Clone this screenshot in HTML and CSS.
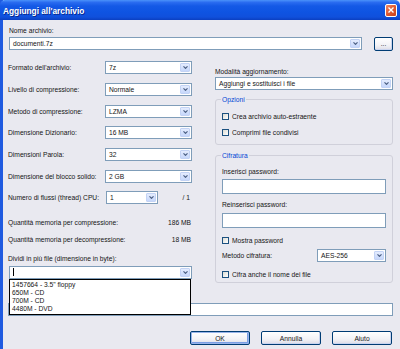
FILE: index.html
```html
<!DOCTYPE html>
<html lang="it">
<head>
    <meta charset="UTF-8">
    <title>Aggiungi all'archivio</title>
    <link rel="stylesheet" href="styles.css">
</head>
<body>
    <div class="window">
        <div class="titlebar">
            <span class="title">Aggiungi all'archivio</span>
            <span class="close">
                <svg width="6" height="6" viewBox="0 0 6 6"><path d="M0.5 0.5 L5.5 5.5 M5.5 0.5 L0.5 5.5" stroke="#fff" stroke-width="1.4"/></svg>
            </span>
        </div>

        <div class="content">
            <div class="label">Nome archivio:</div>
            <div class="name-row">
                <div class="combo name-combo">
                    <span class="value">documenti.7z</span>
                    <span class="arrow"><svg width="5" height="3" viewBox="0 0 5 3"><path d="M0.5 0.3 L2.5 2.4 L4.5 0.3" fill="none" stroke="#4d6185" stroke-width="1.1"/></svg></span>
                </div>
                <button class="btn browse">...</button>
            </div>

            <div class="columns">
                <div class="left">
                    <div class="settings">
                        <span>Formato dell'archivio:</span>
                        <div class="combo"><span class="value">7z</span><span class="arrow"><svg width="5" height="3" viewBox="0 0 5 3"><path d="M0.5 0.3 L2.5 2.4 L4.5 0.3" fill="none" stroke="#4d6185" stroke-width="1.1"/></svg></span></div>

                        <span>Livello di compressione:</span>
                        <div class="combo"><span class="value">Normale</span><span class="arrow"><svg width="5" height="3" viewBox="0 0 5 3"><path d="M0.5 0.3 L2.5 2.4 L4.5 0.3" fill="none" stroke="#4d6185" stroke-width="1.1"/></svg></span></div>

                        <span>Metodo di compressione:</span>
                        <div class="combo"><span class="value">LZMA</span><span class="arrow"><svg width="5" height="3" viewBox="0 0 5 3"><path d="M0.5 0.3 L2.5 2.4 L4.5 0.3" fill="none" stroke="#4d6185" stroke-width="1.1"/></svg></span></div>

                        <span>Dimensione Dizionario:</span>
                        <div class="combo"><span class="value">16 MB</span><span class="arrow"><svg width="5" height="3" viewBox="0 0 5 3"><path d="M0.5 0.3 L2.5 2.4 L4.5 0.3" fill="none" stroke="#4d6185" stroke-width="1.1"/></svg></span></div>

                        <span>Dimensioni Parola:</span>
                        <div class="combo"><span class="value">32</span><span class="arrow"><svg width="5" height="3" viewBox="0 0 5 3"><path d="M0.5 0.3 L2.5 2.4 L4.5 0.3" fill="none" stroke="#4d6185" stroke-width="1.1"/></svg></span></div>

                        <span>Dimensione del blocco solido:</span>
                        <div class="combo"><span class="value">2 GB</span><span class="arrow"><svg width="5" height="3" viewBox="0 0 5 3"><path d="M0.5 0.3 L2.5 2.4 L4.5 0.3" fill="none" stroke="#4d6185" stroke-width="1.1"/></svg></span></div>

                        <span>Numero di flussi (thread) CPU:</span>
                        <div class="threads">
                            <div class="combo thread-combo"><span class="value">1</span><span class="arrow"><svg width="5" height="3" viewBox="0 0 5 3"><path d="M0.5 0.3 L2.5 2.4 L4.5 0.3" fill="none" stroke="#4d6185" stroke-width="1.1"/></svg></span></div>
                            <span class="max">/ 1</span>
                        </div>
                    </div>

                    <div class="memory">
                        <span>Quantità memoria per compressione:</span>
                        <span>186 MB</span>
                    </div>
                    <div class="memory">
                        <span>Quantità memoria per decompressione:</span>
                        <span>18 MB</span>
                    </div>

                    <div class="label split-label">Dividi in più file (dimensione in byte):</div>
                    <div class="split">
                        <div class="combo"><span class="value"><span class="caret"></span></span><span class="arrow"><svg width="5" height="3" viewBox="0 0 5 3"><path d="M0.5 0.3 L2.5 2.4 L4.5 0.3" fill="none" stroke="#4d6185" stroke-width="1.1"/></svg></span></div>
                        <ul class="dropdown">
                            <li>1457664 - 3.5" floppy</li>
                            <li>650M - CD</li>
                            <li>700M - CD</li>
                            <li>4480M - DVD</li>
                        </ul>
                    </div>
                </div>

                <div class="right">
                    <div class="label mode-label">Modalità aggiornamento:</div>
                    <div class="combo mode-combo"><span class="value">Aggiungi e sostituisci i file</span><span class="arrow"><svg width="5" height="3" viewBox="0 0 5 3"><path d="M0.5 0.3 L2.5 2.4 L4.5 0.3" fill="none" stroke="#4d6185" stroke-width="1.1"/></svg></span></div>

                    <fieldset class="group options">
                        <legend>Opzioni</legend>
                        <div class="check"><span class="box"></span>Crea archivio auto-estraente</div>
                        <div class="check"><span class="box"></span>Comprimi file condivisi</div>
                    </fieldset>

                    <fieldset class="group crypt">
                        <legend>Cifratura</legend>
                        <div class="label pw-label">Inserisci password:</div>
                        <div class="input pw-input"></div>
                        <div class="label pw-label2">Reinserisci password:</div>
                        <div class="input pw-input2"></div>
                        <div class="check show-pw"><span class="box"></span>Mostra password</div>
                        <div class="cipher-row">
                            <span>Metodo cifratura:</span>
                            <div class="combo cipher-combo"><span class="value">AES-256</span><span class="arrow"><svg width="5" height="3" viewBox="0 0 5 3"><path d="M0.5 0.3 L2.5 2.4 L4.5 0.3" fill="none" stroke="#4d6185" stroke-width="1.1"/></svg></span></div>
                        </div>
                        <div class="check names"><span class="box"></span>Cifra anche il nome dei file</div>
                    </fieldset>
                </div>
            </div>

            <!-- the "Parametri" label sits under the open list -->
            <div class="params-gap"></div>
            <div class="input params"></div>

            <div class="buttons">
                <button class="btn default">OK</button>
                <button class="btn">Annulla</button>
                <button class="btn">Aiuto</button>
            </div>
        </div>
    </div>
</body>
</html>
```

FILE: styles.css
```css
* {
    margin: 0;
    padding: 0;
    box-sizing: border-box;
}

body {
    width: 400px;
    height: 349px;
    overflow: hidden;
    font-family: 'Liberation Sans', Arial, sans-serif;
    font-size: 6.7px;
    color: #151515;
}

.window {
    height: 349px;
    background: #e9e9f0;
    border-left: 3px solid #1f5ae0;
}

.titlebar {
    height: 20px;
    margin-left: -3px;
    display: flex;
    align-items: center;
    justify-content: space-between;
    padding: 0 3px 0 3px;
    border-radius: 5px 5px 0 0;
    background: linear-gradient(#4a92fa 0%, #2a6cf0 12%, #1459e6 30%, #0e54e2 60%, #1050dc 85%, #0b3fc0 100%);
}

.title {
    color: #fff;
    font-weight: bold;
    font-size: 8.3px;
    padding-top: 1px;
    text-shadow: 1px 1px 0 #0a2a90;
}

.close {
    width: 12px;
    height: 13px;
    display: flex;
    align-items: center;
    justify-content: center;
    border: 1px solid #fff;
    border-radius: 2px;
    background: linear-gradient(135deg, #f0886a 0%, #e05a30 50%, #c8401c 100%);
}

.content {
    padding: 5.5px 7px 0 5px;
}

.label {
    line-height: 9px;
    height: 9px;
}

.content > .label:first-child {
    padding-left: 1px;
}

/* listbox / combobox */
.combo {
    display: flex;
    height: 13px;
    padding: 1px;
    background: #fff;
    border: 1px solid #7f9db9;
}

.combo .value {
    flex: 1;
    line-height: 9px;
    padding-left: 2px;
    white-space: nowrap;
    overflow: hidden;
    display: flex;
    align-items: center;
}

.combo .arrow {
    width: 10px;
    display: flex;
    align-items: center;
    justify-content: center;
    border: 1px solid #c3d3f5;
    border-radius: 1px;
    background: linear-gradient(#e4ecfe, #c6d7fb);
}

.input {
    background: #fff;
    border: 1px solid #7f9db9;
}

.name-row {
    display: flex;
    margin-top: 2.5px;
    margin-left: 1px;
}

.name-combo {
    flex: 1;
}

.btn {
    font-family: inherit;
    font-size: 6.7px;
    color: #151515;
    height: 14px;
    border: 1px solid #003c74;
    border-radius: 2px;
    background: linear-gradient(#ffffff 0%, #f2f2f6 60%, #dcdce6 100%);
    box-shadow: inset -1px -1px 0 #c9d4ef;
}

.btn.browse {
    width: 19px;
    margin-left: 12px;
    height: 14px;
    line-height: 8px;
}

.btn.default {
    box-shadow: inset 0 0 0 1px #98b4ea, inset -1px -1px 0 1px #7a9ee4;
}

.columns {
    display: grid;
    grid-template-columns: 184px 178px;
    column-gap: 23px;
    margin-top: 6px;
}

.settings {
    display: grid;
    grid-template-columns: 97px 87px;
    grid-auto-rows: 21.7px;
    align-items: center;
}

.threads {
    display: flex;
    align-items: center;
}

.thread-combo {
    width: 52px;
    margin-left: 1px;
}

.threads .max {
    margin-left: auto;
    padding-right: 2px;
}

.memory {
    display: flex;
    justify-content: space-between;
    height: 17px;
    line-height: 17px;
    padding-right: 1px;
}

.settings + .memory {
    margin-top: 5.6px;
}

.split-label {
    margin-top: 6px;
}

.split {
    position: relative;
    margin-top: 2.5px;
    margin-left: 1px;
}

.caret {
    display: inline-block;
    width: 1px;
    height: 8px;
    background: #000;
}

.dropdown {
    position: absolute;
    top: 100%;
    left: 0;
    right: 1px;
    list-style: none;
    background: #fff;
    border: 1px solid #000;
    padding: 1px 0 1px 2px;
    z-index: 2;
}

.dropdown li {
    line-height: 8px;
    height: 8px;
}

/* right column */
.mode-label {
    margin-top: 9.5px;
}

.mode-combo {
    margin-top: 1px;
}

.group {
    border: 1px solid #d0d0da;
    border-radius: 3px;
    padding: 4.5px 6px 4px 6px;
}

.group legend {
    color: #0046d5;
    line-height: 9px;
    padding: 0 1px;
    margin-left: -1px;
}

.options {
    margin-top: 5px;
}

.check {
    display: flex;
    align-items: center;
    height: 16px;
}

.check .box {
    width: 7px;
    height: 7px;
    margin-right: 3px;
    border: 1px solid #1c5180;
    background: linear-gradient(135deg, #dcdcd4, #fff);
}

.crypt {
    margin-top: 5.5px;
    padding-top: 0;
    padding-bottom: 1px;
}

.pw-label {
    margin-top: 7px;
}

.pw-input {
    height: 15px;
    margin-top: 3.5px;
}

.pw-label2 {
    margin-top: 5.5px;
}

.pw-input2 {
    height: 15px;
    margin-top: 4.5px;
}

.show-pw {
    height: 14px;
    margin-top: 5px;
}

.cipher-row {
    display: flex;
    align-items: center;
    justify-content: space-between;
    height: 13px;
    margin-top: 1.5px;
}

.cipher-combo {
    width: 69px;
}

.names {
    height: 14px;
    margin-top: 5.5px;
}

.params-gap {
    height: 20px;
}

.params {
    height: 13px;
}

.buttons {
    display: flex;
    justify-content: flex-end;
    gap: 11px;
    margin-top: 15px;
    padding-right: 1px;
}

.buttons .btn {
    width: 60px;
}
```
